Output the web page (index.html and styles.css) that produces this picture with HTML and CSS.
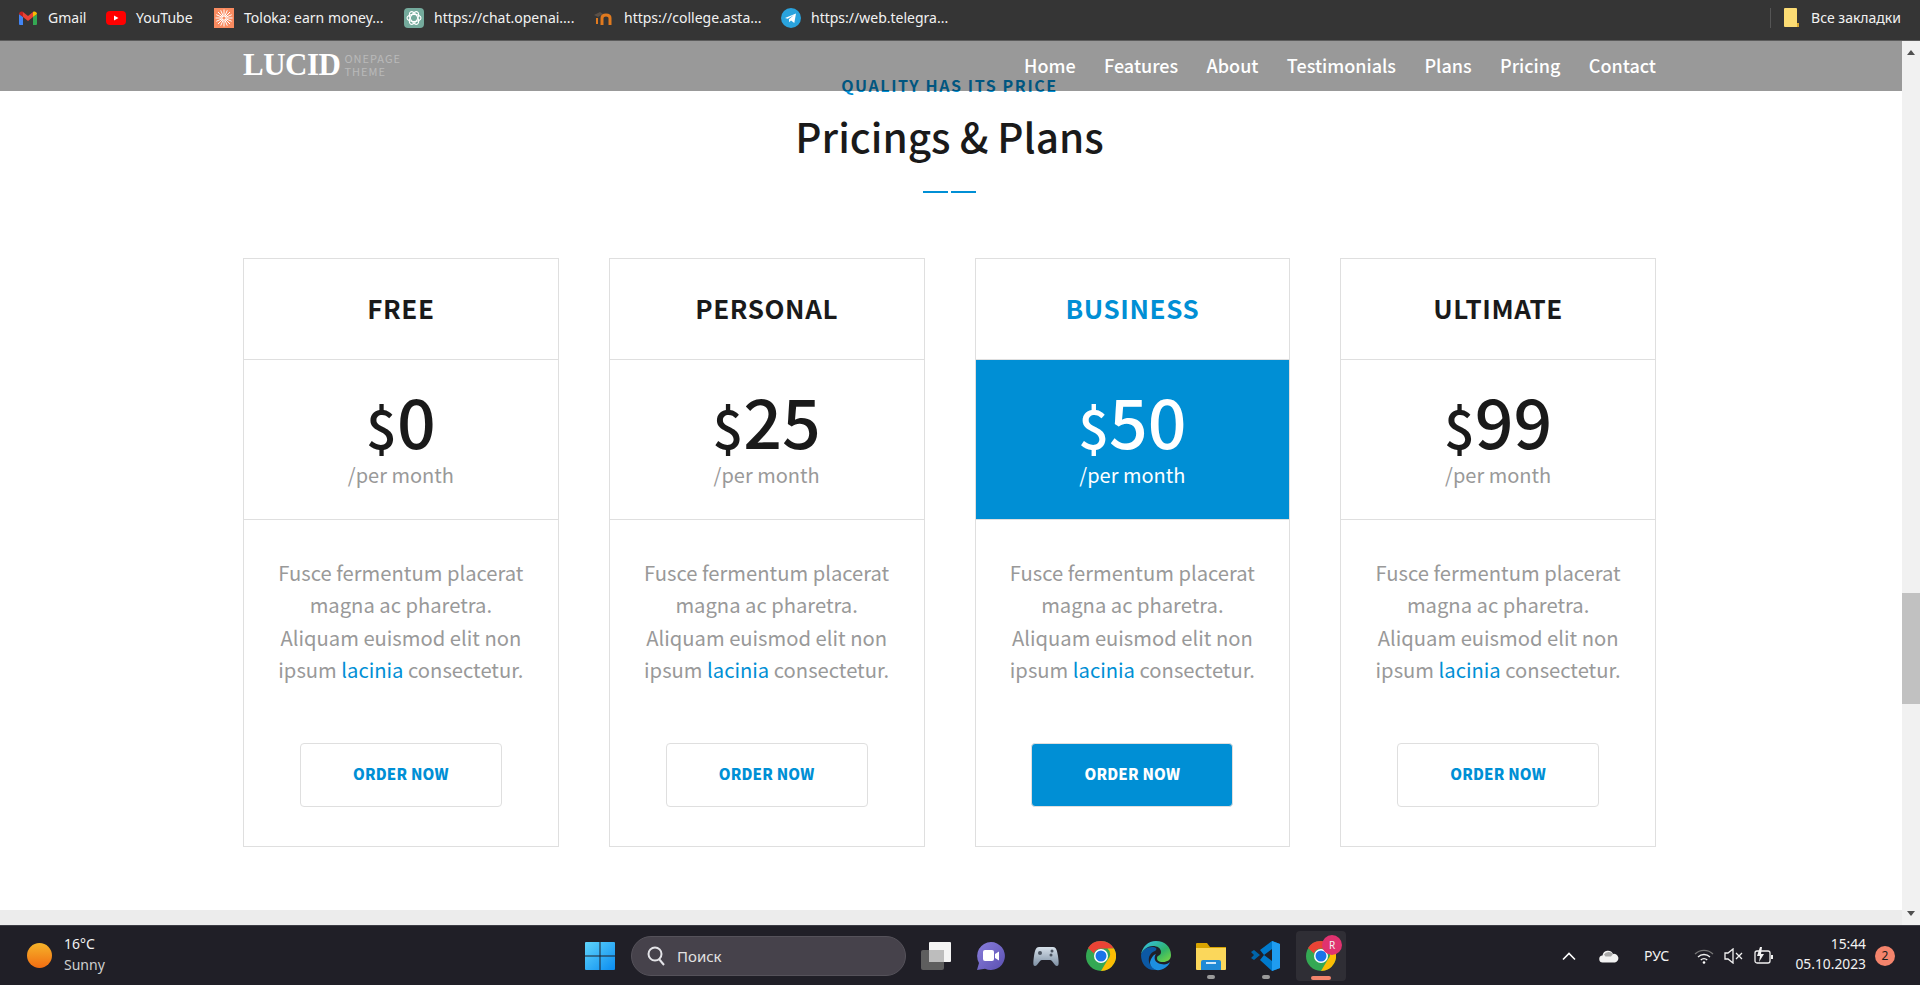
FILE: index.html
```html
<!DOCTYPE html>
<html lang="en">

<head>
    <meta charset="UTF-8">
    <title>Lucid</title>
    <link rel="stylesheet" href="styles.css">
</head>

<body>
    <!-- bookmarks bar -->
    <div class="bookmarks">
        <a class="mark mark-gmail">
            <svg width="18" height="14" viewBox="0 0 18 14"><path fill="#4285f4" d="M0 3v10a1 1 0 0 0 1 1h3V6z"/><path fill="#34a853" d="M18 3v10a1 1 0 0 1-1 1h-3V6z"/><path fill="#ea4335" d="M4 6V1l5 4 5-4v5l-5 4z"/><path fill="#c5221f" d="M0 3c0-2 2.500-3 4-2v5z"/><path fill="#fbbc04" d="M18 3c0-2-2.500-3-4-2v5z"/></svg>
            Gmail
        </a>
        <a class="mark mark-yt">
            <svg width="20" height="14" viewBox="0 0 20 14"><rect width="20" height="14" rx="4" fill="#f00"/><path fill="#fff" d="M8 4.500l4.500 2.500L8 9.500z"/></svg>
            YouTube
        </a>
        <a class="mark mark-toloka">
            <svg width="20" height="20" viewBox="0 0 20 20"><rect width="20" height="20" fill="#f98b60"/><path stroke="#fff" stroke-width="1" d="M10 1.500v17M1.500 10h17M4 4l12 12M16 4L4 16M6.700 2.300l6.600 15.400M13.300 2.300L6.700 17.700M2.300 6.700l15.400 6.600M17.700 6.700L2.300 13.300"/><circle cx="10" cy="10" r="1.600" fill="#f98b60"/></svg>
            Toloka: earn money...
        </a>
        <a class="mark mark-gpt">
            <svg width="20" height="20" viewBox="0 0 20 20"><rect width="20" height="20" rx="4" fill="#74aa9c"/><g fill="none" stroke="#fff" stroke-width="1.1"><ellipse cx="10" cy="10" rx="7" ry="3.600"/><ellipse cx="10" cy="10" rx="7" ry="3.600" transform="rotate(60 10 10)"/><ellipse cx="10" cy="10" rx="7" ry="3.600" transform="rotate(120 10 10)"/></g></svg>
            https://chat.openai....
        </a>
        <a class="mark mark-asta">
            <svg width="20" height="16" viewBox="0 0 20 16"><path fill="#5a5048" d="M0 5l6-3 3 2-5 3z"/><path fill="#e07a1f" d="M2 8h2v6H2z"/><path fill="none" stroke="#e07a1f" stroke-width="3" d="M8 15V8c0-4 8-4 8 0v7"/></svg>
            https://college.asta...
        </a>
        <a class="mark mark-tg">
            <svg width="20" height="20" viewBox="0 0 20 20"><circle cx="10" cy="10" r="10" fill="#2aa3dd"/><path fill="#fff" d="M4 10l11-4.500-1.700 9.500-3.300-2.400-1.800 1.700-.3-3 5-4.300-6.200 3.700z"/></svg>
            https://web.telegra...
        </a>
        <div class="all-marks">
            <svg width="15" height="19" viewBox="0 0 15 19"><path fill="#fcdc74" d="M0 1a1 1 0 0 1 1-1h11a1 1 0 0 1 1 1v14h2v4H1a1 1 0 0 1-1-1z"/><path fill="#d9a931" d="M13 15h2v4h-2z"/></svg>
            Все закладки
        </div>
    </div>

    <div class="browser">
        <div class="viewport">
            <div class="page">
                <!-- sticky site header, see-through -->
                <header class="site-header">
                    <div class="logo">
                        <span class="logo-name">LUCID</span>
                        <span class="logo-sub">ONEPAGE<br>THEME</span>
                    </div>
                    <nav class="nav">
                        <a>Home</a>
                        <a>Features</a>
                        <a>About</a>
                        <a>Testimonials</a>
                        <a>Plans</a>
                        <a>Pricing</a>
                        <a>Contact</a>
                    </nav>
                </header>

                <section class="pricing">
                    <div class="kicker">QUALITY HAS ITS PRICE</div>
                    <h2 class="title">Pricings &amp; Plans</h2>
                    <div class="divider"><span></span><span></span></div>

                    <div class="plans">
                        <div class="plan">
                            <div class="plan-name">FREE</div>
                            <div class="plan-price">
                                <div class="amount"><span class="cur">$</span>0</div>
                                <div class="per">/per month</div>
                            </div>
                            <div class="plan-body">
                                <p>Fusce fermentum placerat<br>magna ac pharetra.<br>Aliquam euismod elit non<br>ipsum <a>lacinia</a> consectetur.</p>
                                <a class="order">ORDER NOW</a>
                            </div>
                        </div>
                        <div class="plan">
                            <div class="plan-name">PERSONAL</div>
                            <div class="plan-price">
                                <div class="amount"><span class="cur">$</span>25</div>
                                <div class="per">/per month</div>
                            </div>
                            <div class="plan-body">
                                <p>Fusce fermentum placerat<br>magna ac pharetra.<br>Aliquam euismod elit non<br>ipsum <a>lacinia</a> consectetur.</p>
                                <a class="order">ORDER NOW</a>
                            </div>
                        </div>
                        <div class="plan featured">
                            <div class="plan-name">BUSINESS</div>
                            <div class="plan-price">
                                <div class="amount"><span class="cur">$</span>50</div>
                                <div class="per">/per month</div>
                            </div>
                            <div class="plan-body">
                                <p>Fusce fermentum placerat<br>magna ac pharetra.<br>Aliquam euismod elit non<br>ipsum <a>lacinia</a> consectetur.</p>
                                <a class="order">ORDER NOW</a>
                            </div>
                        </div>
                        <div class="plan">
                            <div class="plan-name">ULTIMATE</div>
                            <div class="plan-price">
                                <div class="amount"><span class="cur">$</span>99</div>
                                <div class="per">/per month</div>
                            </div>
                            <div class="plan-body">
                                <p>Fusce fermentum placerat<br>magna ac pharetra.<br>Aliquam euismod elit non<br>ipsum <a>lacinia</a> consectetur.</p>
                                <a class="order">ORDER NOW</a>
                            </div>
                        </div>
                    </div>
                </section>
            </div>
            <div class="hscroll"></div>
        </div>
        <div class="vscroll">
            <span class="arrow-up"></span>
            <div class="thumb"></div>
            <span class="arrow-down"></span>
        </div>
    </div>

    <!-- windows taskbar -->
    <footer class="taskbar">
        <div class="weather">
            <span class="sun"></span>
            <div class="weather-text">16°C<br><span>Sunny</span></div>
        </div>
        <div class="task-center">
            <svg class="win" width="30" height="30" viewBox="0 0 30 30"><defs><linearGradient id="w" x1="0" y1="0" x2="1" y2="1"><stop offset="0" stop-color="#5fd4fb"/><stop offset="1" stop-color="#0a8cf0"/></linearGradient></defs><path fill="url(#w)" d="M1 1h13.500v13.500H0V2a1 1 0 0 1 1-1zM15.500 1H29a1 1 0 0 1 1 1v12.500H15.500zM0 15.500h14.500V29H1a1 1 0 0 1-1-1zM15.500 15.500H30V28a1 1 0 0 1-1 1H15.500z"/></svg>
            <div class="search">
                <svg width="20" height="22" viewBox="0 0 20 22"><circle cx="9" cy="9" r="6.500" fill="none" stroke="#e4e4e8" stroke-width="2"/><path stroke="#e4e4e8" stroke-width="2" d="M13 14l5 6"/></svg>
                Поиск
            </div>
            <svg class="ticon" width="30" height="30" viewBox="0 0 30 30"><rect x="0" y="9" width="23" height="20" rx="2" fill="#5e5e5e"/><rect x="8" y="1" width="22" height="20" rx="1" fill="#f4f4f4"/><rect x="8" y="9" width="15" height="12" fill="#bdbdbd"/></svg>
            <svg class="ticon" width="30" height="30" viewBox="0 0 30 30"><defs><linearGradient id="m" x1="0" y1="0" x2="1" y2="1"><stop offset="0" stop-color="#8a7fdc"/><stop offset="1" stop-color="#5a4fb0"/></linearGradient></defs><path fill="url(#m)" d="M15 1a14 14 0 1 1-6 26.700L1 29l2-7A14 14 0 0 1 15 1z"/><rect x="7" y="9" width="11" height="11" rx="2" fill="#fff"/><path fill="#fff" d="M19 13l4-2.500v9L19 17z"/></svg>
            <svg class="ticon" width="30" height="30" viewBox="0 0 30 30"><defs><linearGradient id="g" x1="0" y1="0" x2="0" y2="1"><stop offset="0" stop-color="#d6e0ea"/><stop offset="1" stop-color="#7e90a4"/></linearGradient></defs><path fill="url(#g)" d="M8 6h14c3 0 4 3 5 9 1 7 1 10-1 10-3 0-4-6-7-6h-8c-3 0-4 6-7 6-2 0-2-3-1-10 1-6 2-9 5-9z"/><circle cx="9" cy="12" r="2" fill="#4a5360"/><circle cx="21" cy="10" r="1.500" fill="#4a5360"/><circle cx="20" cy="14" r="1.500" fill="#4a5360"/></svg>
            <svg class="ticon" width="30" height="30" viewBox="0 0 30 30"><circle cx="15" cy="15" r="15" fill="#34a853"/><path fill="#ea4335" d="M15 0a15 15 0 0 1 13 7.500H15a7.500 7.500 0 0 0-7 5L2 7a15 15 0 0 1 13-7z"/><path fill="#fbbc04" d="M28 7.500a15 15 0 0 1-13 22.500l6.500-11a7.500 7.500 0 0 0 0-11.500z"/><circle cx="15" cy="15" r="7" fill="#fff"/><circle cx="15" cy="15" r="5.500" fill="#1a73e8"/></svg>
            <svg class="ticon" width="30" height="30" viewBox="0 0 30 30"><defs><linearGradient id="e" x1="0" y1="0" x2="1" y2="1"><stop offset="0" stop-color="#35c1f1"/><stop offset=".6" stop-color="#2fb36a"/><stop offset="1" stop-color="#7fd93f"/></linearGradient></defs><path fill="url(#e)" d="M15 0c9 0 15 6 15 14 0 5-4 7-8 7-5 0-6-2-6-4 0-3 4-2 4-6 0-4-4-6-8-6C6 5 1 10 0 14 1 6 7 0 15 0z"/><path fill="#0c59a4" d="M0 14c1-5 6-8 11-8 4 0 6 2 3 4-5 2-7 6-6 11 1 3 3 6 7 8C6 30 0 23 0 14z"/><path fill="#1d8fe0" d="M15 29c-4-2-6-4-6-8 1-4 3-7 6-8-3 4-1 9 5 10 4 1 7 0 9-2-2 5-8 9-14 8z"/></svg>
            <svg class="ticon" width="30" height="30" viewBox="0 0 30 30"><path fill="#d9a400" d="M0 3a1 1 0 0 1 1-1h10l3 4h16v4H0z"/><path fill="#fbd75b" d="M0 7h30v21a1 1 0 0 1-1 1H1a1 1 0 0 1-1-1z"/><path fill="#1f8ad6" d="M5 21a2 2 0 0 1 2-2h16a2 2 0 0 1 2 2v8H5z"/><rect x="10" y="21" width="10" height="2" fill="#cfe8fa"/></svg>
            <svg class="ticon" width="30" height="30" viewBox="0 0 30 30"><path fill="#0065a9" d="M0 11l3-2 6 5-6 5-3-2 3-3z"/><path fill="#007acc" d="M21 0l8 3v24l-8 3-12-11 4-5 8 6V8l-8 6-4-5z"/><path fill="#1f9cf0" d="M21 0l8 3v24l-8 3z"/></svg>
            <div class="active-app">
                <svg width="30" height="30" viewBox="0 0 30 30"><circle cx="15" cy="15" r="15" fill="#34a853"/><path fill="#ea4335" d="M15 0a15 15 0 0 1 13 7.500H15a7.500 7.500 0 0 0-7 5L2 7a15 15 0 0 1 13-7z"/><path fill="#fbbc04" d="M28 7.500a15 15 0 0 1-13 22.500l6.500-11a7.500 7.500 0 0 0 0-11.500z"/><circle cx="15" cy="15" r="7" fill="#fff"/><circle cx="15" cy="15" r="5.500" fill="#1a73e8"/></svg>
                <span class="profile">R</span>
                <span class="running"></span>
            </div>
            <span class="dot dot-files"></span>
            <span class="dot dot-code"></span>
        </div>
        <div class="tray">
            <svg class="tray-up" width="14" height="10" viewBox="0 0 14 10"><path fill="none" stroke="#fff" stroke-width="1.600" d="M1 8.500l6-6 6 6"/></svg>
            <svg class="tray-cloud" width="20" height="14" viewBox="0 0 20 14"><path fill="#f2f2f2" d="M4 13.500a3.500 3.500 0 0 1-.5-7A5.500 5.500 0 0 1 14 5a4.300 4.300 0 0 1 2 8.500z"/><path fill="#a9a9a9" d="M5 5.500A5.500 5.500 0 0 1 14 5l-2 2.500H6.500z"/></svg>
            <span class="lang">РУС</span>
            <svg class="tray-wifi" width="20" height="16" viewBox="0 0 20 16"><g fill="none" stroke-width="1.300"><path stroke="#777" d="M1 6a13 13 0 0 1 18 0"/><path stroke="#f2f2f2" d="M4 9a8.500 8.500 0 0 1 12 0"/><path stroke="#f2f2f2" d="M6.800 12a4.500 4.500 0 0 1 6.400 0"/></g><circle cx="10" cy="14.500" r="1.300" fill="#fff"/></svg>
            <svg class="tray-sound" width="19" height="16" viewBox="0 0 19 16"><path fill="none" stroke="#f2f2f2" stroke-width="1.300" d="M1 5h3l5-4v14l-5-4H1z"/><path stroke="#f2f2f2" stroke-width="1.300" d="M12 5l6 6M18 5l-6 6"/></svg>
            <svg class="tray-battery" width="20" height="18" viewBox="0 0 20 18"><rect x="1" y="4" width="15" height="12" rx="2" fill="none" stroke="#f2f2f2" stroke-width="1.300"/><rect x="17" y="8" width="2" height="4" fill="#f2f2f2"/><path fill="#f2f2f2" d="M6 0L3 9h3l-1 6 5-8H7l1-7z"/></svg>
        </div>
        <div class="clock">15:44<br>05.10.2023</div>
        <span class="notify">2</span>
    </footer>
</body>

</html>
```

FILE: styles.css
```css
/* default css */
* {
    box-sizing: border-box;
}

html,
body {
    height: 985px;
    margin: 0;
    overflow: hidden;
}

body {
    display: flex;
    flex-direction: column;
    font-family: "Noto Sans CJK JP", "Noto Sans", sans-serif;
    background: #fff;
}

/* bookmarks bar */
.bookmarks {
    height: 41px;
    flex: none;
    display: flex;
    align-items: center;
    padding: 0 19px 5px 19px;
    background: #353535;
    border-bottom: 1px solid #5c5c5c;
    color: #f2f2f2;
    font-family: "Noto Sans", sans-serif;
    font-size: 14px;
    white-space: nowrap;
}

.mark {
    display: flex;
    align-items: center;
    gap: 10px;
}

.mark-gmail { width: 87px; gap: 11px; }
.mark-yt { width: 108px; }
.mark-toloka { width: 190px; }
.mark-gpt { width: 190px; }
.mark-asta { width: 187px; }
.mark-tg { width: 200px; }

.all-marks {
    margin-left: auto;
    display: flex;
    align-items: center;
    gap: 12px;
    height: 20px;
    padding-left: 13px;
    border-left: 1px solid #555;
}

/* browser area */
.browser {
    flex: 1;
    min-height: 0;
    display: flex;
}

.viewport {
    flex: 1;
    display: flex;
    flex-direction: column;
    min-width: 0;
}

.page {
    flex: 1;
    position: relative;
    overflow: hidden;
    background: #fff;
}

.hscroll {
    height: 15px;
    flex: none;
    background: #ececec;
}

.vscroll {
    width: 18px;
    flex: none;
    position: relative;
    background: #f1f1f1;
}

.arrow-up,
.arrow-down {
    position: absolute;
    left: 5px;
    width: 0;
    height: 0;
    border-left: 4px solid transparent;
    border-right: 4px solid transparent;
}

.arrow-up {
    top: 9px;
    border-bottom: 5px solid #505050;
}

.arrow-down {
    bottom: 9px;
    border-top: 5px solid #505050;
}

.thumb {
    position: absolute;
    top: 552px;
    left: 0;
    width: 18px;
    height: 111px;
    background: #c1c1c1;
}

/* site header lies over the page */
.site-header {
    position: absolute;
    top: 0;
    left: 0;
    right: 0;
    height: 50px;
    z-index: 2;
    display: flex;
    align-items: center;
    justify-content: space-between;
    padding: 0 246px 2px 243px;
    background: rgba(0, 0, 0, 0.4);
}

.logo {
    display: flex;
    align-items: center;
    gap: 4px;
}

.logo-name {
    font-family: "Liberation Serif", serif;
    font-weight: bold;
    font-size: 31px;
    line-height: 30px;
    letter-spacing: -0.5px;
    color: #fff;
}

.logo-sub {
    font-size: 11px;
    line-height: 13px;
    letter-spacing: 1px;
    color: #b9b9b9;
}

.nav {
    display: flex;
    gap: 28.4px;
    font-size: 18px;
    font-weight: 500;
    color: #fff;
}

/* pricing section */
.pricing {
    padding: 34px 246px 0 243px;
    text-align: center;
}

.kicker {
    font-size: 16px;
    line-height: 20px;
    font-weight: 700;
    letter-spacing: 1.6px;
    color: #008fd5;
}

.title {
    margin: 16px 0 0;
    font-size: 40.5px;
    line-height: 50px;
    font-weight: 500;
    color: #1a1a1a;
}

.divider {
    display: flex;
    justify-content: center;
    gap: 3px;
    margin-top: 30px;
}

.divider span {
    width: 25px;
    height: 2px;
    background: #008fd5;
}

.plans {
    display: grid;
    grid-template-columns: repeat(4, 1fr);
    gap: 50px;
    margin-top: 65px;
}

.plan {
    border: 1px solid #dfdfdf;
    height: 589px;
}

.plan-name {
    height: 101px;
    padding-bottom: 3px;
    display: flex;
    align-items: center;
    justify-content: center;
    border-bottom: 1px solid #dfdfdf;
    font-size: 26px;
    font-weight: 700;
    letter-spacing: 0.6px;
    color: #1a1a1a;
}

.plan-price {
    height: 160px;
    padding-top: 24px;
    border-bottom: 1px solid #dfdfdf;
    color: #1a1a1a;
}

.amount {
    font-size: 68px;
    line-height: 72px;
    font-weight: 500;
}

.cur {
    font-size: 54px;
}

.per {
    margin-top: 2px;
    font-size: 20px;
    line-height: 22px;
    color: #999;
}

.plan-body {
    padding-top: 37px;
    display: flex;
    flex-direction: column;
    align-items: center;
}

.plan-body p {
    margin: 0;
    font-size: 20.2px;
    line-height: 32.3px;
    color: #999;
}

.plan-body p a {
    color: #008fd5;
}

.order {
    margin-top: 57px;
    width: 202px;
    height: 64px;
    padding-bottom: 3px;
    display: flex;
    align-items: center;
    justify-content: center;
    border: 1px solid #dfdfdf;
    border-radius: 4px;
    font-size: 15px;
    font-weight: 900;
    letter-spacing: 0.2px;
    color: #008fd5;
}

/* highlighted plan */
.featured .plan-name {
    color: #008fd5;
}

.featured .plan-price {
    background: #008fd5;
    color: #fff;
}

.featured .per {
    color: #fff;
}

.featured .order {
    background: #008fd5;
    color: #fff;
}

/* taskbar */
.taskbar {
    height: 60px;
    flex: none;
    position: relative;
    display: flex;
    align-items: center;
    padding: 0 25px 0 27px;
    background: #201f27;
    border-top: 1px solid #3c3c44;
    font-family: "Noto Sans", sans-serif;
    color: #f2f2f2;
}

.weather {
    display: flex;
    align-items: center;
    gap: 12px;
    width: 558px;
}

.sun {
    width: 25px;
    height: 25px;
    border-radius: 50%;
    background: linear-gradient(#f5b42a, #f26d12);
}

.weather-text {
    margin-bottom: 4px;
    font-size: 14px;
    line-height: 21px;
}

.weather-text span {
    color: #cfcfcf;
}

.task-center {
    display: flex;
    align-items: center;
    position: relative;
}

.search {
    width: 275px;
    height: 40px;
    margin: 0 15px 0 16px;
    padding-left: 14px;
    display: flex;
    align-items: center;
    gap: 11px;
    border: 1px solid #55525a;
    border-radius: 20px;
    background: #46424b;
    font-size: 15px;
    color: #e2e2e2;
}

.ticon {
    margin-right: 25px;
    flex: none;
}

.active-app {
    position: relative;
    width: 50px;
    height: 50px;
    margin-left: -10px;
    display: flex;
    align-items: center;
    justify-content: center;
    background: #2f2e35;
    border-radius: 4px;
}

.profile {
    position: absolute;
    top: 4px;
    right: 4px;
    width: 20px;
    height: 20px;
    border-radius: 50%;
    background: #e0326f;
    font-size: 10px;
    line-height: 20px;
    text-align: center;
}

.running {
    position: absolute;
    left: 15px;
    bottom: 1px;
    width: 20px;
    height: 4px;
    border-radius: 2px;
    background: #f4846c;
}

.dot {
    position: absolute;
    bottom: 2px;
    width: 8px;
    height: 4px;
    border-radius: 2px;
    background: #9a9a9a;
}

.dot-files { left: 622px; }
.dot-code { left: 677px; }

.tray {
    margin-left: auto;
    display: flex;
    align-items: center;
}

.tray-cloud { margin-left: 23px; }
.tray-wifi { margin-left: 25px; }
.tray-sound { margin-left: 10px; }
.tray-battery { margin-left: 11px; }

.lang {
    width: 25px;
    margin-left: 25px;
    font-size: 14px;
    white-space: nowrap;
}

.clock {
    width: 92px;
    margin-bottom: 3px;
    text-align: right;
    font-size: 13.8px;
    line-height: 20px;
}

.notify {
    width: 20px;
    height: 20px;
    margin-left: 9px;
    border-radius: 50%;
    background: #f4846c;
    color: #1c1c1c;
    font-size: 12px;
    line-height: 20px;
    text-align: center;
}
```
